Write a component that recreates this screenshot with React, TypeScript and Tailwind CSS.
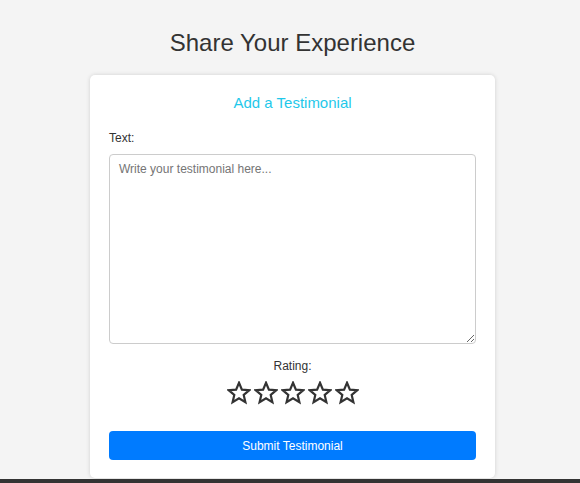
import { useState } from 'react';

function Star({ filled }: { filled: boolean }) {
    return (
        <svg width="24" height="24" viewBox="0 0 24 24" className="block">
            <polygon
                points="12,1.8 14.9,8.6 22.3,9.2 16.7,14 18.4,21.3 12,17.4 5.6,21.3 7.3,14 1.7,9.2 9.1,8.6"
                fill={filled ? '#333' : 'none'}
                stroke="#333"
                strokeWidth="2.2"
                strokeLinejoin="miter"
            />
        </svg>
    );
}

export default function App() {
    const [text, setText] = useState('');
    const [rating, setRating] = useState(0);

    return (
        <div className="min-h-screen bg-[#f4f4f4] font-['Liberation_Sans',Arial,sans-serif] text-[#333]">
            <div className="ml-[90px] w-[405px] pt-[29px]">
                <h1 className="text-center text-[24px] leading-[28px] font-normal">Share Your Experience</h1>

                {/* Form card */}
                <div className="mt-[18px] rounded-[5px] bg-white px-[19px] pt-[19px] pb-[18px] shadow-[0_0_4px_rgba(0,0,0,0.15)]">
                    <h2 className="text-center text-[15px] leading-[18px] text-[#1fc8ea]">Add a Testimonial</h2>

                    <label className="mt-[19px] mb-[9px] block text-[12px] leading-[14px]">Text:</label>
                    <textarea
                        value={text}
                        onChange={(e) => setText(e.target.value)}
                        placeholder="Write your testimonial here..."
                        className="block h-[190px] w-full rounded-[4px] border border-[#ccc] px-[9px] pt-[7px] pb-[9px] text-[12px] leading-[14px] placeholder:text-[#757575] focus:outline-none"
                    />

                    <div className="mt-[15px] text-center text-[12px] leading-[14px]">Rating:</div>
                    <div className="mt-[8px] flex justify-center gap-[3px]">
                        {[1, 2, 3, 4, 5].map((n) => (
                            <button key={n} type="button" onClick={() => setRating(n)} className="cursor-pointer">
                                <Star filled={n <= rating} />
                            </button>
                        ))}
                    </div>

                    <button
                        type="button"
                        className="mt-[26px] block h-[29px] w-full rounded-[4px] bg-[#007bff] text-[12px] text-white"
                    >
                        Submit Testimonial
                    </button>
                </div>
            </div>
            <div className="mt-[1px] h-[40px] bg-[#333]" />
        </div>
    );
}
